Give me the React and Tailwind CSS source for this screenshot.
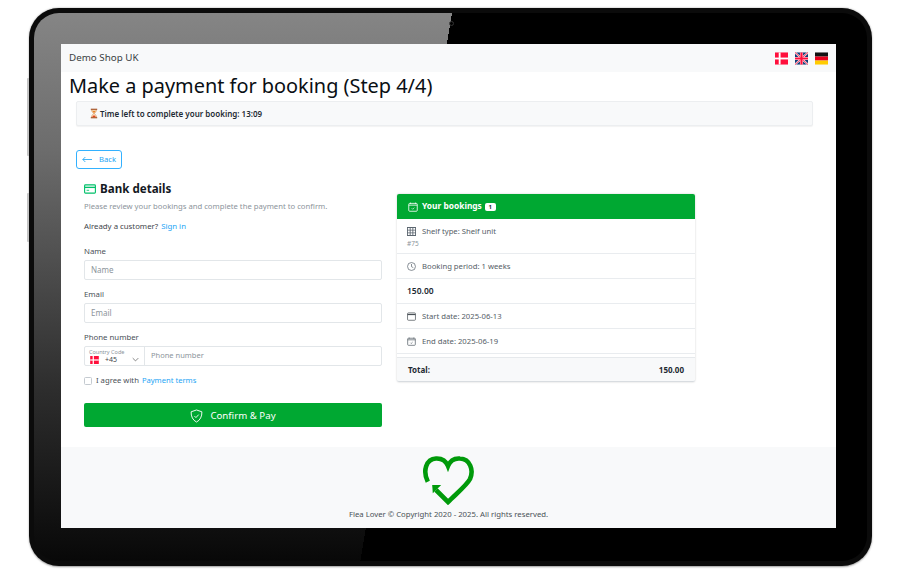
const F = { fontFamily: '"Noto Sans", "Open Sans", sans-serif' };

function FlagDK({ className }) {
  return (
    <svg viewBox="0 0 14 13" className={className}>
      <rect width="14" height="13" fill="#ff0f3c" />
      <rect x="4" width="2" height="13" fill="#fff" />
      <rect y="5.5" width="14" height="2" fill="#fff" />
    </svg>
  );
}
function FlagUK({ className }) {
  return (
    <svg viewBox="0 0 14 13" className={className}>
      <rect width="14" height="13" fill="#123a75" />
      <path d="M0 0L14 13M14 0L0 13" stroke="#fff" strokeWidth="2" />
      <path d="M0 0L14 13M14 0L0 13" stroke="#ff0f3c" strokeWidth="1" />
      <path d="M7 0V13M0 6.5H14" stroke="#fff" strokeWidth="3.4" />
      <path d="M7 0V13M0 6.5H14" stroke="#ff0f3c" strokeWidth="2.4" />
    </svg>
  );
}
function FlagDE({ className }) {
  return (
    <svg viewBox="0 0 14 13" className={className}>
      <rect width="14" height="4.4" fill="#111" />
      <rect y="4.4" width="14" height="4.3" fill="#e8001c" />
      <rect y="8.7" width="14" height="4.3" fill="#ffcc00" />
    </svg>
  );
}
function Hourglass() {
  return (
    <svg viewBox="0 0 10 12" className="w-[8px] h-[11px] shrink-0">
      <rect x="1" y="0" width="8" height="1.5" fill="#a0522d" />
      <rect x="1" y="10.5" width="8" height="1.5" fill="#a0522d" />
      <path d="M2 1.5H8C8 4 6 5 5.6 6C6 7 8 8 8 10.5H2C2 8 4 7 4.4 6C4 5 2 4 2 1.5Z" fill="#fbe3c4" stroke="#c9742b" strokeWidth="0.6" />
      <path d="M3 3H7L5 5.6Z" fill="#e8832a" />
      <path d="M2.8 10.3L5 8L7.2 10.3Z" fill="#e8401c" />
    </svg>
  );
}
function CalCheck({ className }) {
  return (
    <svg viewBox="0 0 16 16" fill="none" stroke="currentColor" className={className}>
      <rect x="1.2" y="2.2" width="13.6" height="12.6" rx="1.5" strokeWidth="1.3" />
      <path d="M1.2 5H14.8" strokeWidth="1.3" />
      <path d="M4 1V3M12 1V3" strokeWidth="1.2" />
      <path d="M6 10.2L7.4 11.6L10 9" strokeWidth="1.1" />
    </svg>
  );
}
function Row({ icon, children, sub, h = "h-[25px]" }) {
  return (
    <div className={`${h} border-b border-[#e9ecef] px-[10px] pt-[2px] flex flex-col justify-center text-[7.7px] text-[#555e67]`}>
      <div className="flex items-center gap-[6px]">
        <span className="w-[9px] h-[9px] flex shrink-0">{icon}</span>
        <span>{children}</span>
      </div>
      {sub && <div className="text-[6.5px] text-[#8d959c] mt-[3px] leading-[8px]">{sub}</div>}
    </div>
  );
}

export default function App() {
  return (
    <div style={F} className="w-[900px] h-[570px] bg-white overflow-hidden pt-[8px] pl-[29px]">
      <div className="relative w-[843px] h-[558px] rounded-[30px] bg-[#0b0b0b] p-[5px] shadow-[0_0.5px_2px_rgba(0,0,0,0.4)]">
        <span className="absolute -left-[2px] top-[70px] w-[2px] h-[78px] bg-[#c4c4c4] rounded-l-[1px]" />
        <span className="absolute -left-[2px] top-[185px] w-[2px] h-[49px] bg-[#c4c4c4] rounded-l-[1px]" />
        <div className="relative w-full h-full rounded-[25px] bg-[linear-gradient(99.5deg,transparent_45.2%,#000_45.2%),linear-gradient(180deg,#858585_0%,#6c6c6c_25%,#2e2e2e_68%,#080808_100%)] pt-[31px] pl-[27px]">
          <span className="absolute left-[415px] top-[8px] w-[5px] h-[5px] rounded-full border border-[#333]" />
          <div className="relative w-[775px] h-[484px] bg-white flex flex-col overflow-hidden">
            {/* nav */}
            <div className="h-[28px] shrink-0 bg-[#f8f9fa] flex items-center justify-between pl-[8px] pr-[8px]">
              <span className="text-[9.8px] text-[#3a3f44] mt-[1px]">Demo Shop UK</span>
              <div className="flex items-center gap-[7px]">
                <FlagDK className="w-[13px] h-[13px]" />
                <FlagUK className="w-[13px] h-[13px]" />
                <FlagDE className="w-[13px] h-[13px]" />
              </div>
            </div>
            {/* title */}
            <h1 className="text-[19.9px] leading-[28px] text-[#0a0f14] pl-[8px] font-normal h-[28px]">Make a payment for booking (Step 4/4)</h1>
            {/* alert */}
            <div className="mt-[1px] ml-[15px] w-[737px] h-[25px] bg-[#f8f9fa] border border-[#eceef0] rounded-[2px] shadow-[0_1px_1px_rgba(0,0,0,0.05)] flex items-center gap-[2px] pl-[13px] text-[8px] font-semibold text-[#1e2a33]">
              <Hourglass />
              <span>Time left to complete your booking: 13:09</span>
            </div>
            {/* back */}
            <button className="mt-[24px] ml-[15px] w-[46px] h-[19px] border border-[#33b1ff] rounded-[3px] flex items-center justify-center gap-[7px] text-[7.6px] text-[#1ea5f5]">
              <svg viewBox="0 0 12 8" fill="none" stroke="currentColor" strokeWidth="1" className="w-[10px] h-[7px]">
                <path d="M12 4H1M4 1L1 4L4 7" />
              </svg>
              <span>Back</span>
            </button>
            {/* columns */}
            <div className="flex ml-[23px] mt-[13px] gap-[15px] flex-1">
              {/* left */}
              <div className="w-[298px]">
                <div className="flex items-center gap-[4px] h-[14px]">
                  <svg viewBox="0 0 14 11" fill="none" stroke="#00c06a" strokeWidth="1.3" className="w-[12px] h-[10px]">
                    <rect x="0.7" y="0.7" width="12.6" height="9.6" rx="1" />
                    <path d="M0.7 3.6H13.3" strokeWidth="1.6" />
                    <path d="M3 7H6" strokeWidth="1" />
                  </svg>
                  <span className="text-[11.6px] font-bold text-[#14191f]">Bank details</span>
                </div>
                <p className="text-[7.7px] text-[#8c949b] mt-[4px] leading-[12px]">Please review your bookings and complete the payment to confirm.</p>
                <p className="text-[7.8px] text-[#3f464c] mt-[8px] leading-[12px]">
                  Already a customer? <span className="text-[#1ea5f5] ml-[1px]">Sign in</span>
                </p>
                <label className="block text-[7.8px] text-[#4a5157] mt-[13px] leading-[12px]">Name</label>
                <div className="mt-[3px] h-[20px] border border-[#e2e6e9] rounded-[2px] flex items-center pl-[6px] text-[8px] text-[#8c949b]">Name</div>
                <label className="block text-[7.8px] text-[#4a5157] mt-[8px] leading-[12px]">Email</label>
                <div className="mt-[3px] h-[20px] border border-[#e2e6e9] rounded-[2px] flex items-center pl-[6px] text-[8px] text-[#8c949b]">Email</div>
                <label className="block text-[7.8px] text-[#4a5157] mt-[8px] leading-[12px]">Phone number</label>
                <div className="mt-[3px] h-[20px] border border-[#e2e6e9] rounded-[2px] flex items-center">
                  <div className="w-[60px] h-full border-r border-[#e2e6e9] pl-[4px] pr-[5px] flex flex-col justify-center">
                    <div className="text-[5.5px] leading-[7px] text-[#8c949b]">Country Code</div>
                    <div className="flex items-center leading-[8px] text-[7px] text-[#3f464c]">
                      <FlagDK className="w-[11px] h-[8px]" />
                      <span className="ml-[5px]">+45</span>
                      <svg viewBox="0 0 10 6" fill="none" stroke="#555" strokeWidth="1" className="w-[7px] h-[5px] ml-auto">
                        <path d="M1 1L5 5L9 1" />
                      </svg>
                    </div>
                  </div>
                  <span className="pl-[6px] text-[7.5px] text-[#8c949b]">Phone number</span>
                </div>
                <div className="flex items-center mt-[10px] h-[10px] text-[7.7px] text-[#4a5157]">
                  <span className="w-[8px] h-[8px] border border-[#c4cad0] rounded-[1.5px] mr-[4px] shrink-0" />
                  <span>I agree with</span>
                  <span className="text-[#1ea5f5] ml-[3px] text-[7.6px]">Payment terms</span>
                </div>
                <button className="mt-[17px] w-full h-[24px] pt-[2px] bg-[#00a832] rounded-[2px] flex items-center justify-center gap-[7px] text-[9.7px] text-white">
                  <svg viewBox="0 0 14 15" fill="none" stroke="currentColor" strokeWidth="1" className="w-[13px] h-[14px]">
                    <path d="M7 1L12.8 3C13 8 11 12 7 14C3 12 1 8 1.2 3Z" />
                    <path d="M4.8 7.6L6.4 9.2L9.4 6" />
                  </svg>
                  <span>Confirm &amp; Pay</span>
                </button>
              </div>
              {/* right */}
              <div className="w-[298px] mt-[12px] rounded-[2px] shadow-[0_0_2px_rgba(0,0,0,0.22)] flex flex-col self-start">
                <div className="h-[25px] bg-[#00a832] rounded-t-[2px] flex items-center pl-[11px] text-[8.4px] font-bold text-white">
                  <CalCheck className="w-[10px] h-[10px] mr-[4px]" />
                  <span>Your bookings</span>
                  <span className="ml-[3px] w-[11px] h-[8px] bg-white rounded-[2px] text-[#1e2a33] text-[6px] leading-[8px] text-center">1</span>
                </div>
                <Row h="h-[35px]" sub="#75" icon={
                  <svg viewBox="0 0 10 10" fill="#5c6670" className="w-[9px] h-[9px]">
                    <path d="M0 0H10V10H0ZM1 3H3V1H1ZM4 3H6V1H4ZM7 3H9V1H7ZM1 6H3V4H1ZM4 6H6V4H4ZM7 6H9V4H7ZM1 9H3V7H1ZM4 9H6V7H4ZM7 9H9V7H7Z" fillRule="evenodd" />
                  </svg>
                }>Shelf type: Shelf unit</Row>
                <Row icon={
                  <svg viewBox="0 0 10 10" fill="none" stroke="#5c6670" strokeWidth="0.8" className="w-[9px] h-[9px]">
                    <circle cx="5" cy="5" r="4.4" />
                    <path d="M5 2.2V5.2L7 6.3" />
                  </svg>
                }>Booking period: 1 weeks</Row>
                <div className="h-[25px] pt-[1px] border-b border-[#e9ecef] px-[10px] flex items-center text-[8.5px] font-semibold text-[#1e2a33]">150.00</div>
                <Row icon={
                  <svg viewBox="0 0 10 10" fill="none" stroke="#4a5157" strokeWidth="0.8" className="w-[9px] h-[9px]">
                    <rect x="0.6" y="1" width="8.8" height="8.2" rx="1" />
                    <path d="M0.6 2.8H9.4" strokeWidth="1.3" />
                  </svg>
                }>Start date: 2025-06-13</Row>
                <Row icon={<CalCheck className="w-[9px] h-[9px]" />}>End date: 2025-06-19</Row>
                <div className="mt-[3px] h-[25px] bg-[#f8f9fa] border-t border-[#e6e9ec] border-b border-b-[#d8dce0] rounded-b-[2px] flex items-center justify-between px-[11px] text-[8px] font-bold text-[#1e2a33]">
                  <span>Total:</span>
                  <span>150.00</span>
                </div>
              </div>
            </div>
            {/* footer */}
            <div className="h-[81px] shrink-0 bg-[#f8f9fa] flex flex-col items-center">
              <svg viewBox="0 0 54 50" fill="none" className="w-[54px] h-[50px] mt-[8px] mr-[2px]">
                <path d="M6.8 26.7C1.5 16 5 4 15 3.5C21 3.2 25 6 27 11C29 6 33 3 39 3.5C49 4 53 15 49 24C46 30 35 39 27 47L15 35" stroke="#009a0a" strokeWidth="4.6" />
                <path d="M11.2 30L20.2 30L11.8 38.3Z" fill="#009a0a" />
              </svg>
              <p className="text-[7.75px] text-[#4a5157] leading-[12px] mt-[3px]">Flea Lover © Copyright 2020 - 2025. All rights reserved.</p>
            </div>
          </div>
        </div>
      </div>
    </div>
  );
}
